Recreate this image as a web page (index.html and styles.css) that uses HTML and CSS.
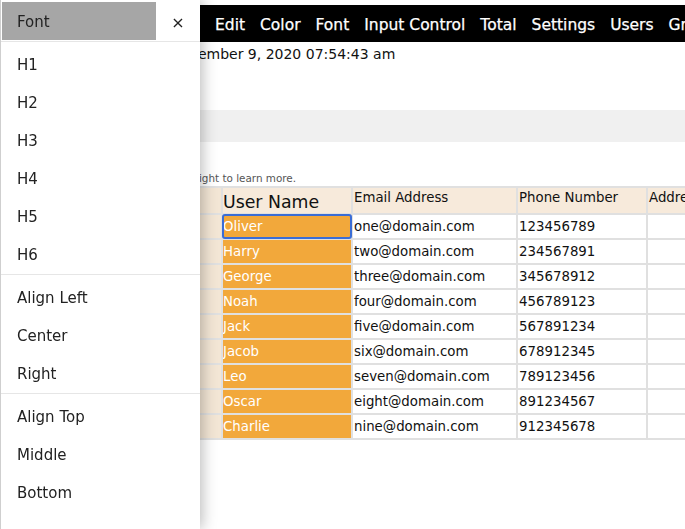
FILE: index.html
```html
<!DOCTYPE html>
<html lang="en">
<head>
<meta charset="utf-8">
<title>Grid</title>
<link rel="stylesheet" href="styles.css">
</head>
<body>
<div class="page">
  <nav class="menubar">
    <span class="menu-item">Edit</span>
    <span class="menu-item">Color</span>
    <span class="menu-item">Font</span>
    <span class="menu-item">Input Control</span>
    <span class="menu-item">Total</span>
    <span class="menu-item">Settings</span>
    <span class="menu-item">Users</span>
    <span class="menu-item">Group</span>
  </nav>
  <p class="stamp">September 9, 2020 07:54:43 am</p>
  <div class="band"></div>
  <div class="hint"><span>Click on a cell and use the menu on the right to learn more.</span></div>
  <table class="grid">
    <colgroup>
      <col class="c-num"><col class="c-name"><col class="c-mail"><col class="c-phone"><col class="c-addr">
    </colgroup>
    <thead>
      <tr><th class="rownum"></th><th class="big">User Name</th><th>Email Address</th><th>Phone Number</th><th>Address</th></tr>
    </thead>
    <tbody>
      <tr><td class="rownum"></td><td class="name selected">Oliver</td><td>one@domain.com</td><td>123456789</td><td></td></tr>
      <tr><td class="rownum"></td><td class="name">Harry</td><td>two@domain.com</td><td>234567891</td><td></td></tr>
      <tr><td class="rownum"></td><td class="name">George</td><td>three@domain.com</td><td>345678912</td><td></td></tr>
      <tr><td class="rownum"></td><td class="name">Noah</td><td>four@domain.com</td><td>456789123</td><td></td></tr>
      <tr><td class="rownum"></td><td class="name">Jack</td><td>five@domain.com</td><td>567891234</td><td></td></tr>
      <tr><td class="rownum"></td><td class="name">Jacob</td><td>six@domain.com</td><td>678912345</td><td></td></tr>
      <tr><td class="rownum"></td><td class="name">Leo</td><td>seven@domain.com</td><td>789123456</td><td></td></tr>
      <tr><td class="rownum"></td><td class="name">Oscar</td><td>eight@domain.com</td><td>891234567</td><td></td></tr>
      <tr><td class="rownum"></td><td class="name">Charlie</td><td>nine@domain.com</td><td>912345678</td><td></td></tr>
    </tbody>
  </table>
</div>

<aside class="drawer">
  <div class="drawer-head">
    <div class="drawer-title">Font</div>
    <div class="drawer-close">×</div>
  </div>
  <ul class="drawer-group">
    <li>H1</li><li>H2</li><li>H3</li><li>H4</li><li>H5</li><li>H6</li>
  </ul>
  <ul class="drawer-group">
    <li>Align Left</li><li>Center</li><li>Right</li>
  </ul>
  <ul class="drawer-group">
    <li>Align Top</li><li>Middle</li><li>Bottom</li>
  </ul>
</aside>
</body>
</html>
```

FILE: styles.css
```css
html, body {
  margin: 0;
  padding: 0;
  overflow: hidden;
  background: #fff;
  font-family: "DejaVu Sans", Verdana, sans-serif;
  color: #111;
}

.page {
  padding-top: 5px;
  width: 685px;
  height: 529px;
  overflow: hidden;
}

.menubar {
  display: flex;
  background: #000;
  height: 37px;
  box-sizing: border-box;
  padding: 3px 0 0 207.5px;
  line-height: 34px;
  white-space: nowrap;
  overflow: hidden;
  font-size: 15.5px;
  color: #fff;
  -webkit-text-stroke: 0.25px #fff;
}

.menu-item {
  flex: none;
  padding: 0 7.5px;
}

.stamp {
  margin: 4px 0 0;
  padding-left: 166px;
  font-size: 14px;
  line-height: 16px;
  white-space: nowrap;
}

.band {
  margin-top: 48px;
  height: 32px;
  background: #f0f0f0;
}

.hint {
  margin: 30px 0 0;
  width: 296px;
  display: flex;
  justify-content: flex-end;
  font-size: 10.4px;
  line-height: 13px;
  color: #555;
  white-space: nowrap;
}

.grid {
  margin-top: 1px;
  margin-left: 180px;
  table-layout: fixed;
  border-collapse: separate;
  border-spacing: 2px;
  background: #e0e0e0;
  width: 690px;
  font-size: 13.33px;
}

.c-num { width: 39px; }
.c-name { width: 128px; }
.c-mail { width: 163px; }
.c-phone { width: 128px; }
.c-addr { width: 220px; }

.grid th {
  height: 25px;
  padding: 2px 1px 0;
  background: #f7eadb;
  font-weight: normal;
  text-align: left;
  vertical-align: top;
  white-space: nowrap;
  overflow: hidden;
  line-height: 15px;
  box-sizing: border-box;
}

.grid th.big {
  font-size: 17.33px;
  line-height: 20px;
  vertical-align: bottom;
  padding: 0 0 1px;
}

.grid td {
  height: 23px;
  padding: 0 1px;
  background: #fff;
  white-space: nowrap;
  overflow: hidden;
  box-sizing: border-box;
}

.grid .rownum,
.grid th.rownum {
  background: #f3e6d5;
}

.grid td.name {
  background: #f2a83b;
  color: #fff;
  padding: 0;
}

.grid td.selected {
  outline: 2px solid #3a6dd6;
  outline-offset: -1px;
  border-radius: 2px;
}

.drawer {
  position: fixed;
  left: 0;
  top: 0;
  bottom: 0;
  width: 199px;
  background: #fff;
  border-left: 1px solid #cfcfcf;
  box-shadow: 2px 0 14px rgba(0, 0, 0, 0.28);
  font-size: 15px;
  color: #222;
}

.drawer-head {
  display: flex;
  padding: 2px 0 1px 1px;
  border-bottom: 1px solid #e6e6e6;
}

.drawer-title {
  width: 154px;
  height: 38px;
  padding: 3px 0 0 15px;
  line-height: 35px;
  box-sizing: border-box;
  background: #a6a6a6;
}

.drawer-close {
  flex: 1;
  text-align: center;
  padding-top: 3px;
  line-height: 35px;
  font-size: 16px;
}

.drawer-group {
  list-style: none;
  margin: 0;
  padding: 4px 0 0;
}

.drawer-group + .drawer-group {
  border-top: 1px solid #e6e6e6;
}

.drawer-group li {
  height: 38px;
  line-height: 38px;
  padding-left: 16px;
}
```
